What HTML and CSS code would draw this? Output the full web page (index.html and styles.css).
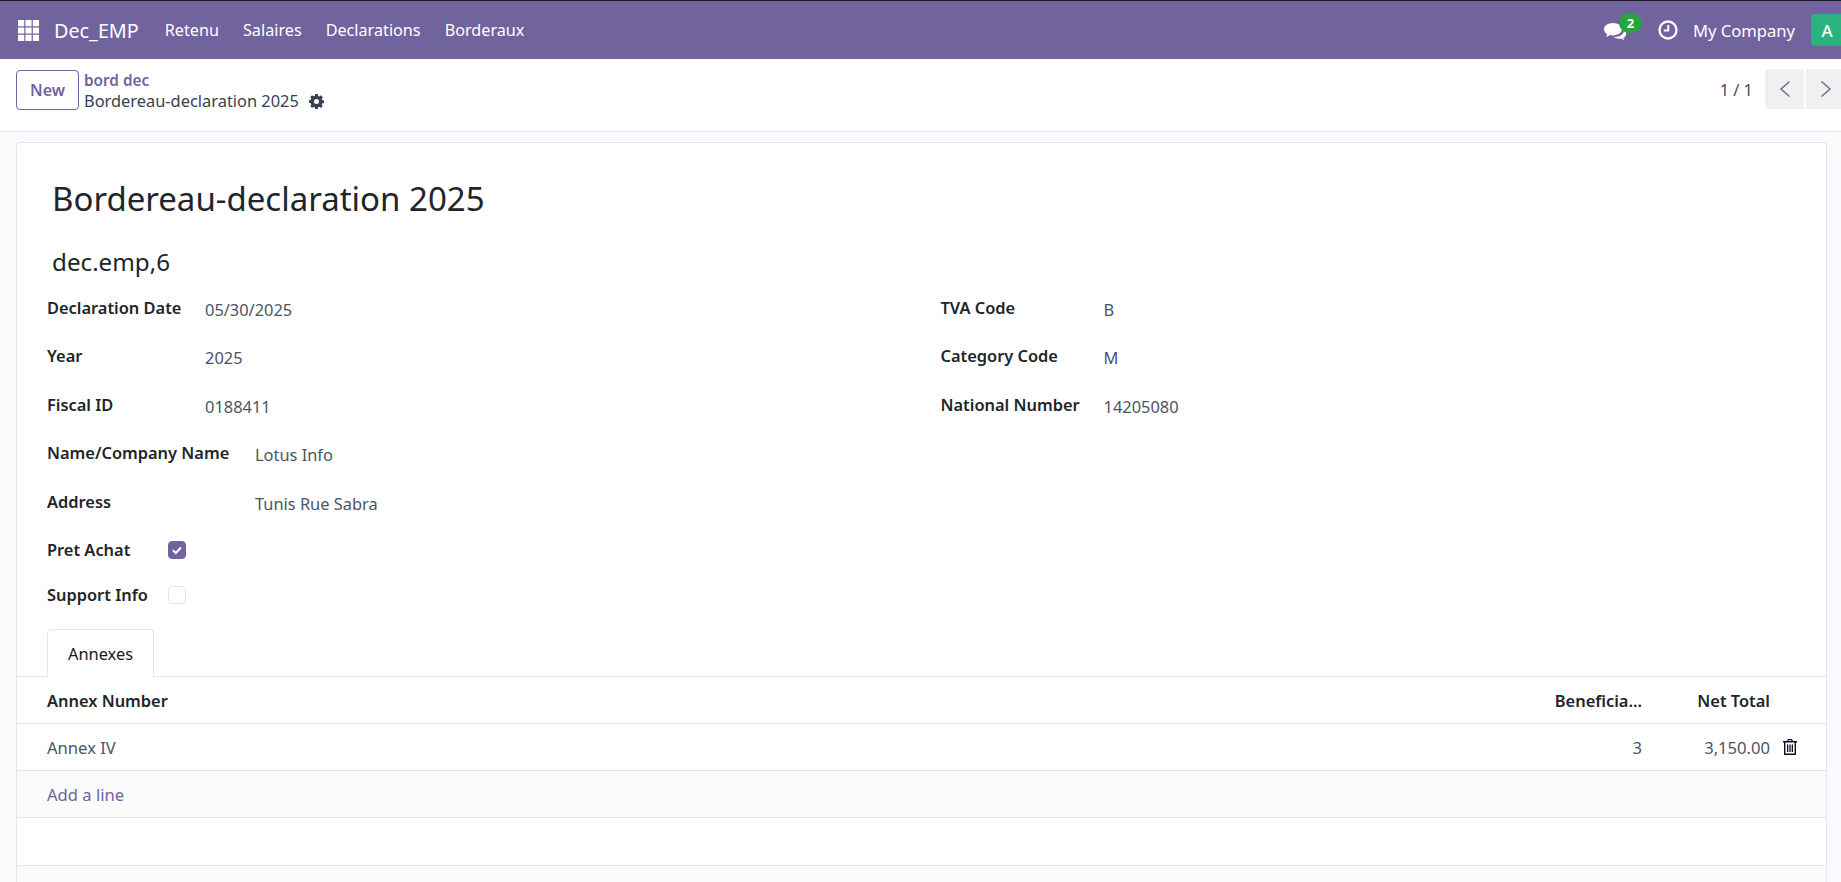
FILE: index.html
```html
<!DOCTYPE html>
<html lang="en">
<head>
<meta charset="utf-8">
<title>Bordereau-declaration 2025</title>
<link rel="stylesheet" href="styles.css">
</head>
<body>
<header class="navbar">
  <svg class="apps" viewBox="0 0 21 21" width="21" height="21"><path fill="#fff" d="M0 0h6.200v6.200H0zM7.400 0h6.200v6.200H7.400zM14.800 0H21v6.200h-6.200zM0 7.400h6.200v6.200H0zM7.400 7.400h6.200v6.200H7.400zM14.800 7.400H21v6.200h-6.200zM0 14.800h6.200V21H0zM7.400 14.800h6.200V21H7.400zM14.800 14.800H21V21h-6.200z"/></svg>
  <span class="brand">Dec_EMP</span>
  <nav class="menu"><span>Retenu</span><span>Salaires</span><span>Declarations</span><span>Borderaux</span></nav>
  <div class="systray">
    <span class="chat">
      <svg viewBox="0 0 24 20" width="25" height="20"><path fill="#fff" d="M9.500 1C4.500 1 .5 3.800.5 7.300c0 2 1.300 3.700 3.300 4.900-.3 1-.9 1.900-1.800 2.800 1.700-.2 3.300-.9 4.500-1.900 1 .2 1.900.3 3 .3 5 0 9-2.800 9-6.100S14.500 1 9.500 1z"/><path fill="#fff" d="M20.500 8.200c0 4-4.300 6.800-9.700 6.800h-.6c1.200 1 3.100 1.700 5.100 1.700.8 0 1.500-.1 2.200-.2 1 .8 2.200 1.300 3.500 1.500-.7-.7-1.100-1.400-1.300-2.100 1.800-.9 3-2.400 3-4 0-1.700-.9-3.100-2.300-4z"/></svg>
      <b class="badge">2</b>
    </span>
    <svg class="clock" viewBox="0 0 20 20" width="20" height="20"><circle cx="10" cy="10" r="8.500" fill="none" stroke="#fff" stroke-width="2.400"/><path d="M10.300 5v5.500H5.800" fill="none" stroke="#fff" stroke-width="2"/></svg>
    <span class="company">My Company</span>
    <span class="avatar">A</span>
  </div>
</header>

<section class="control">
  <button class="new">New</button>
  <div class="crumbs">
    <a class="parent">bord dec</a>
    <div class="current">Bordereau-declaration 2025
      <svg class="gear" viewBox="0 0 16 16" width="15" height="15"><path fill="#374151" fill-rule="evenodd" d="M6.600 0h2.800l.4 2.100 1.200.5L12.800 1.400l2 2-1.200 1.800.5 1.200 1.900.4v2.800l-2 .4-.5 1.200 1.200 1.700-2 2-1.800-1.200-1.200.5-.3 1.800H6.600l-.4-1.900-1.200-.5-1.700 1.200-2-2 1.200-1.700-.5-1.200L0 9.400V6.600l2-.4.500-1.200L1.300 3.300l2-2L5 2.500l1.200-.5zM8 5.300a2.700 2.700 0 1 0 0 5.400 2.700 2.700 0 0 0 0-5.400z"/></svg>
    </div>
  </div>
  <div class="pager">
    <span class="count">1 / 1</span>
    <div class="pager-buttons">
      <span class="pbtn first"><svg viewBox="0 0 12 18" width="12" height="18"><path d="M10.500 1.500 2 9l8.500 7.500" fill="none" stroke="#6b7280" stroke-width="1.500"/></svg></span>
      <span class="pbtn"><svg viewBox="0 0 12 18" width="12" height="18"><path d="M1.500 1.500 10 9l-8.500 7.500" fill="none" stroke="#6b7280" stroke-width="1.500"/></svg></span>
    </div>
  </div>
</section>

<main class="content">
  <article class="sheet">
    <h1 class="title">Bordereau-declaration 2025</h1>
    <h2 class="subtitle">dec.emp,6</h2>
    <div class="groups">
      <div class="group">
        <div class="row w158"><label>Declaration Date</label><span>05/30/2025</span></div>
        <div class="row w158"><label>Year</label><span>2025</span></div>
        <div class="row w158"><label>Fiscal ID</label><span>0188411</span></div>
        <div class="row w208"><label>Name/Company Name</label><span>Lotus Info</span></div>
        <div class="row w208"><label>Address</label><span>Tunis Rue Sabra</span></div>
        <div class="row w121 check"><label>Pret Achat</label><i class="box on"><svg viewBox="0 0 18 18" width="18" height="18"><path d="M5 9.300 7.800 12 13 6.500" fill="none" stroke="#fff" stroke-width="2"/></svg></i></div>
        <div class="row w121 check"><label>Support Info</label><i class="box"></i></div>
      </div>
      <div class="group right">
        <div class="row w163"><label>TVA Code</label><span>B</span></div>
        <div class="row w163"><label>Category Code</label><span>M</span></div>
        <div class="row w163"><label>National Number</label><span>14205080</span></div>
      </div>
    </div>
    <div class="tabs"><span class="tab">Annexes</span></div>
    <table class="lines">
      <thead><tr><th class="name">Annex Number</th><th class="num ben">Beneficia...</th><th class="num tot">Net Total</th><th class="act"></th></tr></thead>
      <tbody>
        <tr><td class="name">Annex IV</td><td class="num ben">3</td><td class="num tot">3,150.00</td><td class="act"><svg viewBox="0 0 14 16" width="14" height="16"><path fill="#0b1020" fill-rule="evenodd" d="M5 0h4l1 2h4v1.500h-1V16H1V3.500H0V2h4zM5.700 1.200 5.300 2h3.400l-.4-.8zM2.400 3.500v11.100h9.200V3.500zM4 5.500h1.300v7.500H4zM6.400 5.500h1.300v7.500H6.400zM8.700 5.500H10v7.500H8.700z"/></svg></td></tr>
        <tr class="add"><td colspan="4" class="name"><a>Add a line</a></td></tr>
        <tr class="blank"><td colspan="4"></td></tr>
      </tbody>
    </table>
    <div class="foot"></div>
  </article>
</main>
</body>
</html>
```
FILE: styles.css
```css
* { box-sizing: border-box; }
html, body { margin: 0; height: 882px; overflow: hidden; }
body { background: #f9fafb; font-family: "Noto Sans", "Open Sans", sans-serif; font-size: 16.4px; color: #374151; }

.navbar { height: 59px; border-top: 1px solid #1d1a26; background: #71639e; display: flex; align-items: center; color: #fff; padding-left: 18px; }
.apps { margin-right: 15px; }
.brand { font-size: 19.8px; margin-right: 14px; }
.menu { display: flex; }
.menu span { padding: 0 12px; font-size: 16.2px; }
.systray { margin-left: auto; display: flex; align-items: center; height: 100%; }
.chat { position: relative; display: flex; margin-right: 30px; margin-top: 4px; }
.badge { position: absolute; left: 16px; top: -9px; min-width: 23px; height: 20px; line-height: 20px; border-radius: 10px; background: #23a541; font-size: 13px; text-align: center; color: #fff; }
.clock { margin-right: 15px; }
.company { font-size: 16.6px; margin-right: 16px; }
.avatar { width: 30px; height: 32px; background: #2bb37f; border-radius: 4px 0 0 4px; font-size: 17px; font-weight: 500; display: flex; align-items: center; justify-content: center; padding-left: 2px; }

.control { height: 73px; background: #fff; border-bottom: 1px solid #e2e4ee; display: flex; align-items: flex-start; padding: 11px 0 0 16px; }
.new { width: 63px; height: 40px; padding: 0; background: #fff; border: 1px solid #71639e; border-radius: 4px; color: #71639e; font: 600 16px "Noto Sans", sans-serif; }
.crumbs { margin-left: 5px; line-height: 20px; }
.parent { display: block; color: #71639e; font-weight: 600; font-size: 15.3px; }
.current { color: #374151; display: flex; align-items: center; gap: 10px; white-space: pre-line; margin-top: 1px; }
.pager { margin-left: auto; margin-right: -4px; margin-top: -1px; display: flex; align-items: center; height: 40px; }
.count { margin-right: 12px; color: #495057; }
.pager-buttons { display: flex; gap: 2px; }
.pbtn { width: 39px; height: 40px; background: #eff0f2; display: flex; align-items: center; justify-content: center; }
.pbtn.first { border-radius: 4px 0 0 4px; }

.content { padding: 10px 14px 0 16px; }
.sheet { background: #fff; border: 1px solid #e2e4ee; border-bottom: 0; border-radius: 4px 4px 0 0; height: 740px; }
.title { margin: 0; padding: 34px 0 0 35px; height: 79px; font-size: 33px; line-height: 44px; font-weight: 400; color: #212529; }
.subtitle { margin: 0; padding: 24px 0 0 35px; height: 75px; font-size: 24.2px; line-height: 31px; font-weight: 400; color: #212529; }
.groups { display: flex; padding-left: 30px; }
.group { width: 894px; }
.right { margin-left: 8px; }
.row { display: flex; height: 48.4px; align-items: flex-start; color: #4b5563; }
.row.check { height: 45px; }
.row label { font-weight: 600; color: #212529; line-height: 22px; white-space: nowrap; }
.row span { line-height: 22px; margin-top: 2px; }
.w158 label { width: 158px; }
.w208 label { width: 208px; }
.w121 label { width: 121px; }
.w163 label { width: 163px; }
.box { width: 18px; height: 18px; margin-top: 2px; border: 1px solid #e2e4ee; border-radius: 4px; display: block; }
.box.on { background: #71639e; border-color: #71639e; display: flex; align-items: center; justify-content: center; }
.box.on svg { flex: none; }

.tabs { display: flex; height: 48px; border-bottom: 1px solid #e2e4ee; padding-left: 30px; }
.tab { width: 107px; height: 48px; border: 1px solid #e2e4ee; border-bottom: 0; border-radius: 4px 4px 0 0; background: #fff; display: flex; align-items: center; justify-content: center; color: #111827; }

.lines { width: 100%; border-collapse: collapse; table-layout: fixed; }
.lines th, .lines td { height: 47px; padding: 0; border-bottom: 1px solid #e2e4ee; font-weight: 400; vertical-align: middle; white-space: nowrap; }
.lines th { font-weight: 600; color: #212529; }
.lines td { color: #4b5563; font-size: 16.6px; }
.lines .name { text-align: left; padding-left: 30px; }
.lines .num { text-align: right; }
.ben { width: 200px; }
.tot { width: 128px; }
.act { width: 56px; padding-left: 13px !important; }
.act svg { display: block; }
.add td { background: #fbfbfb; }
.add a { color: #71639e; }
.lines .blank td { height: 48px; }
.foot { height: 20px; background: #fbfbfb; }
```
